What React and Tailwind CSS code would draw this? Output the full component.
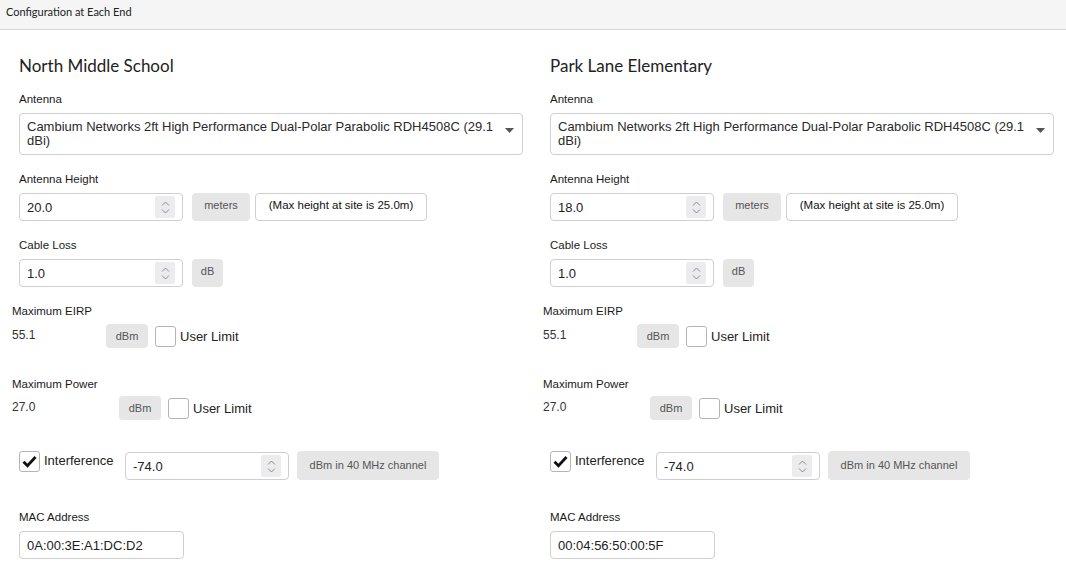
import React from "react";

const sans = "font-['Liberation_Sans',Arial,sans-serif]";

function Spinner() {
  return (
    <div className="w-[20px] h-[22px] bg-[#ececef] rounded-[2px] flex flex-col items-center justify-center gap-[3px]">
      <svg width="9" height="5" viewBox="0 0 9 5">
        <path d="M1 4.5 L4.5 1 L8 4.5" fill="none" stroke="#8a8a8a" strokeWidth="1" />
      </svg>
      <svg width="9" height="5" viewBox="0 0 9 5">
        <path d="M1 0.5 L4.5 4 L8 0.5" fill="none" stroke="#8a8a8a" strokeWidth="1" />
      </svg>
    </div>
  );
}

function NumberInput({ value }) {
  return (
    <div className="w-[164px] h-[28px] border border-[#cfcfcf] rounded-[4px] bg-white flex items-center justify-between pl-[7px] pr-[7px]">
      <span className="text-[13px] text-[#222] pt-[2px]">{value}</span>
      <Spinner />
    </div>
  );
}

function Label({ children, className = "" }) {
  return <div className={`h-[14px] leading-[14px] text-[11.5px] text-[#1a1a1a] ${className}`}>{children}</div>;
}

function Checkbox({ checked }) {
  return (
    <div className="w-[21px] h-[21px] border border-[#b5b5b5] rounded-[3px] bg-white flex items-center justify-center">
      {checked && (
        <svg width="15" height="13" viewBox="0 0 15 13">
          <path d="M1.5 6.8 L5.5 10.8 L13.5 2" fill="none" stroke="#111" strokeWidth="2.8" />
        </svg>
      )}
    </div>
  );
}

function Unit({ children, className = "" }) {
  return (
    <div className={`bg-[#e6e6e6] rounded-[4px] text-[11px] text-[#555] flex justify-center ${className}`}>
      {children}
    </div>
  );
}

function Column({ site }) {
  return (
    <div className="flex flex-col">
      <div className="mt-[26px] h-[20px] leading-[20px] text-[17px] text-[#222] font-['Lato',sans-serif]">{site.name}</div>

      <Label className="mt-[16px]">Antenna</Label>
      <div className="mt-[7px] h-[42px] border border-[#cfcfcf] rounded-[4px] bg-white flex items-start justify-between pl-[7px] pr-[8px] pt-[6px]">
        <span className="text-[13px] leading-[14px] text-[#2a2a2a] w-[470px]">
          Cambium Networks 2ft High Performance Dual-Polar Parabolic RDH4508C (29.1 dBi)
        </span>
        <svg width="9" height="5" viewBox="0 0 9 5" className="mt-[8px]">
          <path d="M0 0 L9 0 L4.5 5 Z" fill="#555" />
        </svg>
      </div>

      <Label className="mt-[17px]">Antenna Height</Label>
      <div className="mt-[7px] flex items-start">
        <NumberInput value={site.height} />
        <Unit className="ml-[9px] w-[58px] h-[28px] items-start pt-[4px]">meters</Unit>
        <div className="ml-[5px] w-[172px] h-[28px] border border-[#cfcfcf] rounded-[4px] bg-white flex items-center justify-center text-[11.5px] text-[#111] pb-[2px]">
          (Max height at site is 25.0m)
        </div>
      </div>

      <Label className="mt-[17px]">Cable Loss</Label>
      <div className="mt-[7px] flex items-start">
        <NumberInput value="1.0" />
        <Unit className="ml-[9px] w-[31px] h-[28px] items-start pt-[4px]">dB</Unit>
      </div>

      <Label className="mt-[17px] -ml-[7px]">Maximum EIRP</Label>
      <div className="mt-[6px] -ml-[7px] h-[24px] flex items-center">
        <span className="w-[94px] text-[12px] text-[#333] pb-[2px]">55.1</span>
        <Unit className="w-[42px] h-[24px] items-center">dBm</Unit>
        <div className="ml-[7px]"><Checkbox /></div>
        <span className="ml-[4px] text-[13px] text-[#222] pt-[2px]">User Limit</span>
      </div>

      <Label className="mt-[29px] -ml-[7px]">Maximum Power</Label>
      <div className="mt-[5px] -ml-[7px] h-[24px] flex items-center">
        <span className="w-[107px] text-[12px] text-[#333] pb-[2px]">27.0</span>
        <Unit className="w-[42px] h-[24px] items-center">dBm</Unit>
        <div className="ml-[7px]"><Checkbox /></div>
        <span className="ml-[4px] text-[13px] text-[#222] pt-[2px]">User Limit</span>
      </div>

      <div className="mt-[31px] h-[29px] flex items-start">
        <Checkbox checked />
        <span className="ml-[4px] text-[13px] text-[#222] leading-[20px] w-[81px]">Interference</span>
        <div className="mt-[1px] flex items-start">
          <NumberInput value="-74.0" />
          <Unit className="ml-[8px] w-[142px] h-[29px] -mt-[1px] items-start pt-[6px]">dBm in 40 MHz channel</Unit>
        </div>
      </div>

      <Label className="mt-[30px]">MAC Address</Label>
      <div className="mt-[7px] w-[165px] h-[28px] border border-[#cfcfcf] rounded-[4px] bg-white flex items-center pl-[7px]">
        <span className="text-[13px] text-[#222] pt-[1px]">{site.mac}</span>
      </div>
    </div>
  );
}

export default function App() {
  const sites = [
    { name: "North Middle School", height: "20.0", mac: "0A:00:3E:A1:DC:D2" },
    { name: "Park Lane Elementary", height: "18.0", mac: "00:04:56:50:00:5F" },
  ];

  return (
    <div className={`w-[1066px] h-[572px] bg-white overflow-hidden ${sans}`}>
      <div className="h-[30px] bg-[#f5f5f5] border-b border-[#d6d6d6] flex items-center pl-[6px] pb-[4px]">
        <span className="text-[11px] text-[#222] font-['Lato',sans-serif]">Configuration at Each End</span>
      </div>
      <div className="grid grid-cols-[504px_504px] gap-x-[27px] pl-[19px]">
        {sites.map((s) => (
          <Column key={s.name} site={s} />
        ))}
      </div>
    </div>
  );
}
